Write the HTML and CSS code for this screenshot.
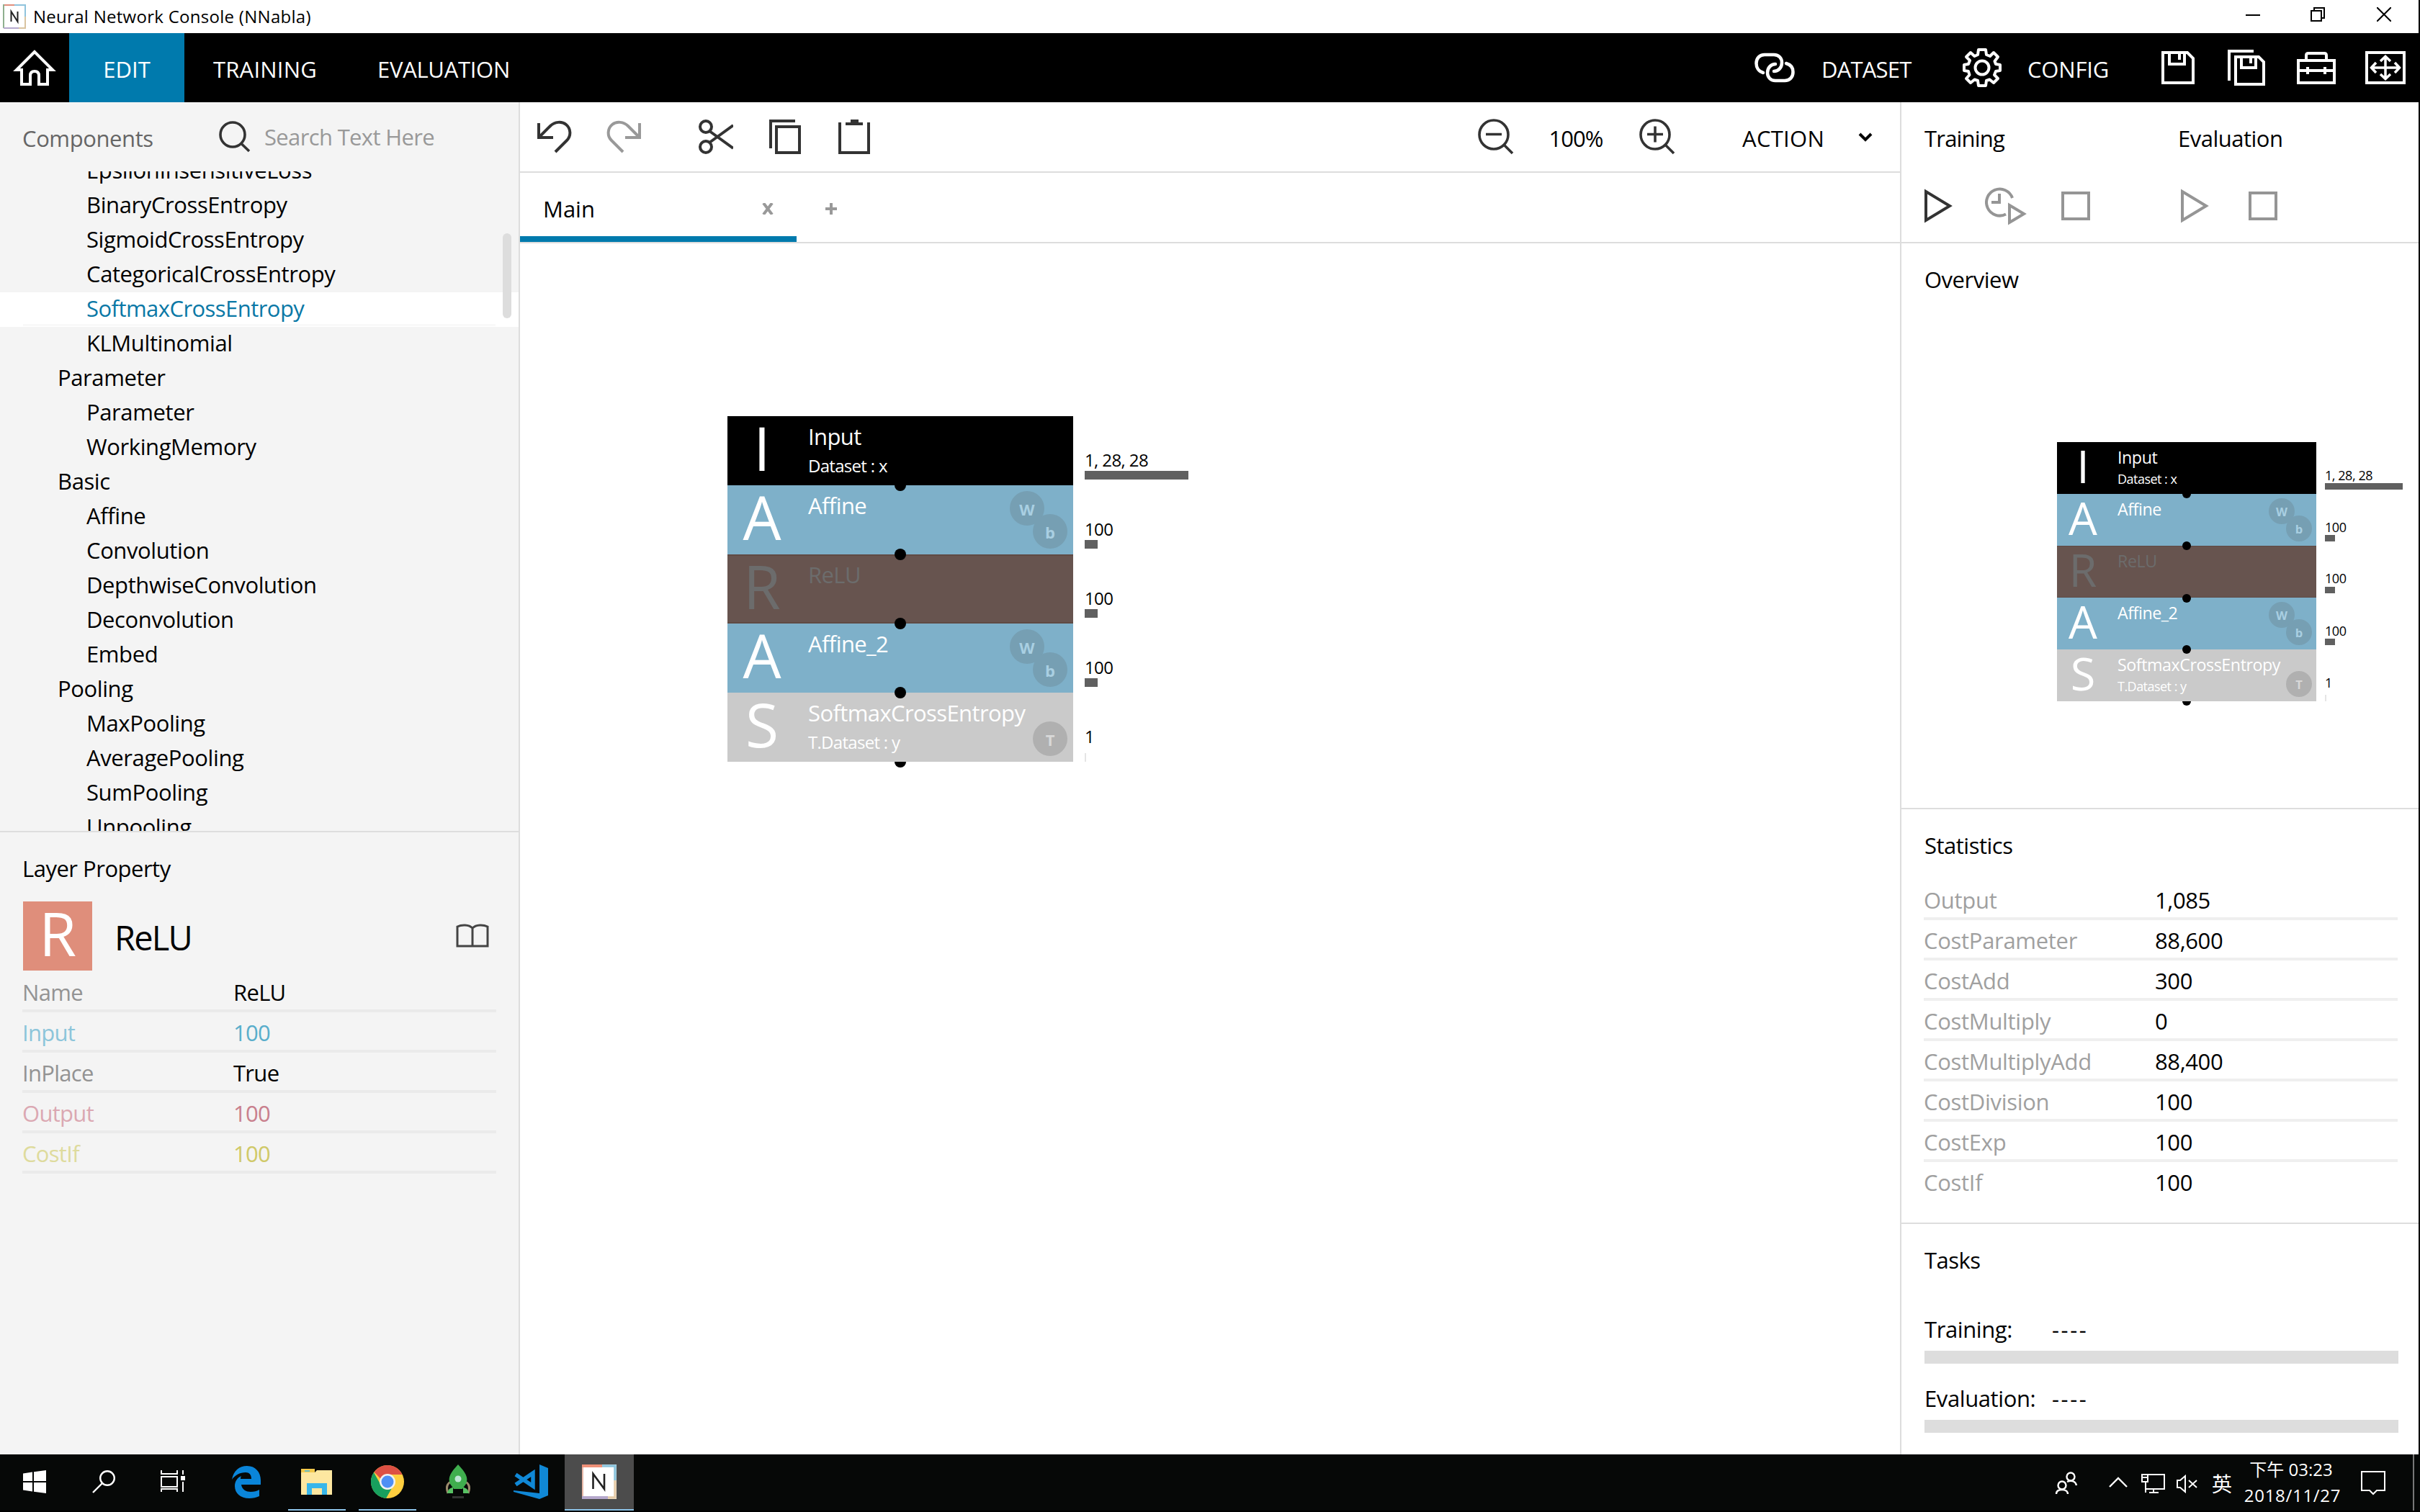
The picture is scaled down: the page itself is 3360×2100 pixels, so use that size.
FILE: index.html
```html
<!DOCTYPE html>
<html lang="en">
<head>
<meta charset="utf-8">
<title>Neural Network Console (NNabla)</title>
<link rel="stylesheet" href="styles.css">
</head>
<body>
<div class="desktop">
  <div class="window">
    <header class="titlebar">
      <svg class="app-icon" width="32" height="34" viewBox="0 0 32 34"><rect width="32" height="34" fill="#fff"/><path d="M0 1H16" stroke="#e08f7d" stroke-width="2"/><path d="M16 1H32M31 0V17" stroke="#8fc3dc" stroke-width="2"/><path d="M1 0V33" stroke="#8fb08f" stroke-width="2"/><path d="M1 33H22" stroke="#b5a8cc" stroke-width="2"/><path d="M22 33H31V17" stroke="#d9c3a0" stroke-width="2" fill="none"/><path d="M11.500 24V10L20.500 24V10" fill="none" stroke="#222" stroke-width="2"/></svg>
      <span class="titlebar-text">Neural Network Console (NNabla)</span>
      <div class="window-buttons">
        <svg width="20" height="20" viewBox="0 0 20 20"><path d="M0 11H20" stroke="#000" stroke-width="2"/></svg>
        <svg width="20" height="20" viewBox="0 0 20 20" fill="none" stroke="#000" stroke-width="2"><path d="M1 5H15V19H1ZM5 5V1H19V15H15"/></svg>
        <svg width="20" height="20" viewBox="0 0 20 20" fill="none" stroke="#000" stroke-width="2"><path d="M0 0L20 20M20 0L0 20"/></svg>
      </div>
    </header>

    <nav class="navbar">
      <div class="nav-home"><svg width="60" height="50" viewBox="0 0 60 50" fill="none" stroke="#fff" stroke-width="4"><path d="M30 3L5 28H12V48H24V36Q24 30 30 30Q36 30 36 36V48H48V28H55Z"/></svg></div>
      <div class="nav-tab nav-tab-edit">EDIT</div>
      <div class="nav-tab nav-tab-training">TRAINING</div>
      <div class="nav-tab nav-tab-evaluation">EVALUATION</div>
      <div class="nav-tools">
        <div class="nav-icon"><svg width="56" height="42" viewBox="0 0 56 42" fill="none" stroke="#fff" stroke-width="4.500" stroke-linecap="round"><path d="M12 28C5 26 2.500 20 2.500 15C2.500 8 7 3 14 3H27C34 3 38 8 38 14C38 21 33 26 27 26"/><path d="M44 15C51 17 53.500 22 53.500 27C53.500 34 49 39 42 39H29C22 39 18 34 18 28C18 21 23 16 29 16"/></svg></div>
        <div class="nav-label nav-label-dataset">DATASET</div>
        <div class="nav-icon"><svg width="54" height="56" viewBox="0 0 54 56" fill="none" stroke="#fff" stroke-width="4" stroke-linejoin="round"><circle cx="27" cy="28" r="9.500"/><path d="M22 3H32L33 10L38 12L43 7L49 13L44.500 19L46 23L52 24V32L46 33L44 38L49 43L43 49L37.500 44.500L33 46L32 53H22L21 46L16.500 44.500L11 49L5 43L9.500 38L8 33L2 32V24L8 23L10 18L5 13L11 7L16.500 12L21 10Z"/></svg></div>
        <div class="nav-label nav-label-config">CONFIG</div>
        <div class="nav-icon"><svg width="48" height="48" viewBox="0 0 48 48" fill="none" stroke="#fff" stroke-width="4"><path d="M3 3H37L45 11V45H3ZM12 3V19H33V3M26 5V13"/></svg></div>
        <div class="nav-icon"><svg class="save-all" width="54" height="52" viewBox="0 0 54 52" fill="none" stroke="#fff" stroke-width="4"><path d="M12 11H44L51 18V49H12ZM20 11V26H40V11M33 13V20M3 44V3H37"/></svg></div>
        <div class="nav-icon"><svg width="56" height="46" viewBox="0 0 56 46" fill="none" stroke="#fff" stroke-width="4"><path d="M3 13H53V44H3ZM14 13V6Q14 3 17 3H39Q42 3 42 6V13M3 27H53M16 22V32M40 22V32"/></svg></div>
        <div class="nav-icon"><svg width="56" height="46" viewBox="0 0 56 46" fill="none" stroke="#fff" stroke-width="4"><path d="M2 2H54V44H2Z"/><path stroke-width="3.500" d="M28 8V38M9 23H47M21 14L28 7.500L35 14M21 32L28 38.500L35 32M15 16L8.500 23L15 30M41 16L47.500 23L41 30"/></svg></div>
      </div>
    </nav>

    <div class="workspace">
      <aside class="left-panel">
        <div class="search-row">
          <span class="search-title">Components</span>
          <svg class="search-icon" width="44" height="44" viewBox="0 0 44 44" fill="none" stroke="#333" stroke-width="3.600"><circle cx="19" cy="19" r="17"/><path d="M30.500 31L42 42"/></svg>
          <span class="search-placeholder">Search Text Here</span>
        </div>
        <div class="component-list">
          <div class="component-scroll">
            <div class="item">EpsilonInsensitiveLoss</div>
            <div class="item">BinaryCrossEntropy</div>
            <div class="item">SigmoidCrossEntropy</div>
            <div class="item">CategoricalCrossEntropy</div>
            <div class="item item-selected">SoftmaxCrossEntropy</div>
            <div class="item">KLMultinomial</div>
            <div class="item item-group">Parameter</div>
            <div class="item">Parameter</div>
            <div class="item">WorkingMemory</div>
            <div class="item item-group">Basic</div>
            <div class="item">Affine</div>
            <div class="item">Convolution</div>
            <div class="item">DepthwiseConvolution</div>
            <div class="item">Deconvolution</div>
            <div class="item">Embed</div>
            <div class="item item-group">Pooling</div>
            <div class="item">MaxPooling</div>
            <div class="item">AveragePooling</div>
            <div class="item">SumPooling</div>
            <div class="item">Unpooling</div>
          </div>
          <div class="scroll-thumb"></div>
        </div>
        <section class="layer-property">
          <h2 class="heading">Layer Property</h2>
          <div class="layer-head">
            <div class="layer-tile">R</div>
            <div class="layer-name">ReLU</div>
            <svg class="book-icon" width="46" height="34" viewBox="0 0 46 34" fill="none" stroke="#444" stroke-width="3"><path d="M23 6C18 1 8 1 2 4V31H44V4C38 1 28 1 23 6V31"/></svg>
          </div>
          <div class="props">
            <div class="prop"><span class="prop-key">Name</span><span>ReLU</span></div>
            <div class="prop prop-input"><span class="prop-key">Input</span><span>100</span></div>
            <div class="prop"><span class="prop-key">InPlace</span><span>True</span></div>
            <div class="prop prop-output"><span class="prop-key">Output</span><span>100</span></div>
            <div class="prop prop-cost"><span class="prop-key">CostIf</span><span>100</span></div>
          </div>
        </section>
      </aside>

      <main class="editor">
        <div class="toolbar">
          <div class="tool"><svg width="48" height="46" viewBox="0 0 48 46" fill="none" stroke="#333" stroke-width="4"><path d="M2 4V24H22M3 23L18 8C24 2 34 1 40 6C47 12 47 22 41 28L25 44"/></svg></div>
          <div class="tool tool-disabled"><svg width="48" height="46" viewBox="0 0 48 46" fill="none" stroke="#999" stroke-width="4"><path d="M46 4V24H26M45 23L30 8C24 2 14 1 8 6C1 12 1 22 7 28L23 44"/></svg></div>
          <div class="tool tool-cut"><svg width="48" height="48" viewBox="0 0 48 48" fill="none" stroke="#333" stroke-width="4"><circle cx="10" cy="10" r="8"/><circle cx="10" cy="38" r="8"/><path d="M15 16L48 40M15 32L48 8"/></svg></div>
          <div class="tool"><svg width="44" height="48" viewBox="0 0 44 48" fill="none" stroke="#333" stroke-width="4"><path d="M2 40V2H36M10 10H42V46H10Z"/></svg></div>
          <div class="tool"><svg width="44" height="48" viewBox="0 0 44 48" fill="none" stroke="#333" stroke-width="4"><path d="M2 4V46H42V4"/><path d="M10 6H34M17 2H28"/></svg></div>
          <div class="zoom-group">
            <div class="tool tool-zoom"><svg width="50" height="50" viewBox="0 0 50 50" fill="none" stroke="#333" stroke-width="3.600"><circle cx="22" cy="22" r="20"/><path d="M36 36L48 48M11 21.500H33"/></svg></div>
            <span class="zoom-value">100%</span>
            <div class="tool tool-zoom"><svg width="50" height="50" viewBox="0 0 50 50" fill="none" stroke="#333" stroke-width="3.600"><circle cx="22" cy="22" r="20"/><path d="M36 36L48 48M11 21.500H33M22 10.500V32.500"/></svg></div>
            <div class="action"><span>ACTION</span><svg width="20" height="14" viewBox="0 0 20 14" fill="none" stroke="#000" stroke-width="4"><path d="M2 2L10 10L18 2"/></svg></div>
          </div>
        </div>
        <div class="tabs">
          <div class="tab"><span>Main</span><svg width="16" height="16" viewBox="0 0 16 16" fill="none" stroke="#999" stroke-width="4"><path d="M2 0L14 16M14 0L2 16"/></svg></div>
          <div class="tab-add"><svg width="16" height="16" viewBox="0 0 16 16" stroke="#999" stroke-width="4"><path d="M0 8H16M8 0V16"/></svg></div>
        </div>
        <div class="canvas">
          <div class="graph graph-main">
            <div class="node node-input"><b class="glyph">I</b><span class="node-name">Input</span><span class="node-sub">Dataset : x</span><i class="port"></i><div class="out"><span>1, 28, 28</span><i class="bar" style="width:144px"></i></div></div>
            <div class="node node-affine"><b class="glyph">A</b><span class="node-name">Affine</span><i class="badge badge-w">W</i><i class="badge badge-b">b</i><i class="port"></i><div class="out"><span>100</span><i class="bar" style="width:18px"></i></div></div>
            <div class="node node-relu"><b class="glyph">R</b><span class="node-name">ReLU</span><i class="port"></i><div class="out"><span>100</span><i class="bar" style="width:18px"></i></div></div>
            <div class="node node-affine"><b class="glyph">A</b><span class="node-name">Affine_2</span><i class="badge badge-w">W</i><i class="badge badge-b">b</i><i class="port"></i><div class="out"><span>100</span><i class="bar" style="width:18px"></i></div></div>
            <div class="node node-softmax"><b class="glyph">S</b><span class="node-name">SoftmaxCrossEntropy</span><span class="node-sub">T.Dataset : y</span><i class="badge badge-t">T</i><i class="port port-last"></i><div class="out"><span>1</span><i class="bar bar-tiny" style="width:2px"></i></div></div>
          </div>
        </div>
      </main>

      <aside class="right-panel">
        <section class="run">
          <div class="run-group run-training">
            <h2 class="run-title">Training</h2>
            <div class="run-buttons">
              <svg width="40" height="48" viewBox="0 0 40 48" fill="none" stroke="#333" stroke-width="4"><path d="M2 4V44L35 24Z"/></svg>
              <svg width="58" height="54" viewBox="0 0 58 54" fill="none" stroke="#959595" stroke-width="4"><path d="M29 38.500A18.500 18.500 0 1 1 38 16M20 10V22H9"/><path d="M34 26V50L54 38Z"/></svg>
              <svg width="40" height="40" viewBox="0 0 40 40" fill="none" stroke="#959595" stroke-width="4"><path d="M2 2H38V38H2Z"/></svg>
            </div>
          </div>
          <div class="run-group run-evaluation">
            <h2 class="run-title">Evaluation</h2>
            <div class="run-buttons">
              <svg width="40" height="48" viewBox="0 0 40 48" fill="none" stroke="#959595" stroke-width="4"><path d="M2 4V44L35 24Z"/></svg>
              <svg width="40" height="40" viewBox="0 0 40 40" fill="none" stroke="#959595" stroke-width="4"><path d="M2 2H38V38H2Z"/></svg>
            </div>
          </div>
        </section>
        <section class="overview">
          <h2 class="heading">Overview</h2>
          <div class="overview-stage">
            <div class="graph graph-overview">
              <div class="node node-input"><b class="glyph">I</b><span class="node-name">Input</span><span class="node-sub">Dataset : x</span><i class="port"></i><div class="out"><span>1, 28, 28</span><i class="bar" style="width:144px"></i></div></div>
              <div class="node node-affine"><b class="glyph">A</b><span class="node-name">Affine</span><i class="badge badge-w">W</i><i class="badge badge-b">b</i><i class="port"></i><div class="out"><span>100</span><i class="bar" style="width:18px"></i></div></div>
              <div class="node node-relu"><b class="glyph">R</b><span class="node-name">ReLU</span><i class="port"></i><div class="out"><span>100</span><i class="bar" style="width:18px"></i></div></div>
              <div class="node node-affine"><b class="glyph">A</b><span class="node-name">Affine_2</span><i class="badge badge-w">W</i><i class="badge badge-b">b</i><i class="port"></i><div class="out"><span>100</span><i class="bar" style="width:18px"></i></div></div>
              <div class="node node-softmax"><b class="glyph">S</b><span class="node-name">SoftmaxCrossEntropy</span><span class="node-sub">T.Dataset : y</span><i class="badge badge-t">T</i><i class="port port-last"></i><div class="out"><span>1</span><i class="bar bar-tiny" style="width:2px"></i></div></div>
            </div>
          </div>
        </section>
        <section class="statistics">
          <h2 class="heading">Statistics</h2>
          <div class="props">
            <div class="prop"><span class="prop-key">Output</span><span>1,085</span></div>
            <div class="prop"><span class="prop-key">CostParameter</span><span>88,600</span></div>
            <div class="prop"><span class="prop-key">CostAdd</span><span>300</span></div>
            <div class="prop"><span class="prop-key">CostMultiply</span><span>0</span></div>
            <div class="prop"><span class="prop-key">CostMultiplyAdd</span><span>88,400</span></div>
            <div class="prop"><span class="prop-key">CostDivision</span><span>100</span></div>
            <div class="prop"><span class="prop-key">CostExp</span><span>100</span></div>
            <div class="prop"><span class="prop-key">CostIf</span><span>100</span></div>
          </div>
        </section>
        <section class="tasks">
          <h2 class="heading">Tasks</h2>
          <div class="task"><span class="task-key">Training:</span><span class="task-value">----</span></div>
          <div class="task-bar"></div>
          <div class="task"><span class="task-key">Evaluation:</span><span class="task-value">----</span></div>
          <div class="task-bar"></div>
        </section>
      </aside>
    </div>
  </div>

  <footer class="taskbar">
    <div class="task-icon"><svg width="32" height="32" viewBox="0 0 32 32" fill="#fff"><path d="M0 4.500L13 2.500V15H0ZM15 2.200L32 0V15H15ZM0 17H13V29.500L0 27.500ZM15 17H32V32L15 29.800Z"/></svg></div>
    <div class="task-icon"><svg width="32" height="32" viewBox="0 0 32 32" fill="none" stroke="#fff" stroke-width="2.400"><circle cx="21" cy="11" r="9.800"/><path d="M14 18L1 31"/></svg></div>
    <div class="task-icon"><svg width="34" height="32" viewBox="0 0 34 32" fill="none" stroke="#fff" stroke-width="2"><path d="M1 0V5H23V0M1 9H23V23H1ZM1 30V26H23V30M31 0V6M31 16V30"/><path d="M28 11H34" stroke-width="6"/></svg></div>
    <div class="task-icon task-edge"><svg width="42" height="46" viewBox="0 0 42 46"><path fill="#0a85d9" d="M1 20C3 8 11 1 22 1C34 1 41 10 41 21V27H14C15 34 21 37 27 37C32 37 36 36 39 34V43C35 45 30 46 25 46C13 46 5 39 5 29C5 22 9 17 14 15C13 17 13 18 13 19H28C28 13 25 10 20 10C12 10 5 14 1 20Z"/></svg></div>
    <div class="task-icon task-folder open"><svg width="44" height="36" viewBox="0 0 44 36"><path fill="#f2c94c" d="M0 0H19V5H0Z"/><path fill="#6cc0c8" d="M5 2H12V4H5Z"/><path fill="#fde7a0" d="M0 5H19L22 2H43V36H0Z"/><path fill="#38b6ea" d="M8 20H36V36H29V27H15V36H8Z"/></svg></div>
    <div class="task-icon task-chrome open"><svg width="46" height="46" viewBox="0 0 46 46"><circle cx="23" cy="23" r="23" fill="#ffcf3f"/><path fill="#dd5044" d="M23 0A23 23 0 0 1 43.500 13H23A10.500 10.500 0 0 0 13.500 19L4.500 9.500A23 23 0 0 1 23 0Z"/><path fill="#18a05e" d="M4 10A23 23 0 0 0 21 46L29 32A10.500 10.500 0 0 1 13.500 27Z"/><circle cx="23" cy="23" r="11" fill="#f1f1f1"/><circle cx="23" cy="23" r="8.500" fill="#4f8ff5"/></svg></div>
    <div class="task-icon task-rocket"><svg width="36" height="48" viewBox="0 0 36 48"><path d="M8 24C2 27 1 32 4 40M28 24C34 27 35 32 32 40" fill="none" stroke="#9c8b6c" stroke-width="3"/><path fill="#3fae4e" d="M18 0C28 11 33 18 29 27L24 34H12L7 27C3 18 8 11 18 0Z"/><path fill="#57c163" d="M3 40C4 34 8 32 11 32V40ZM33 40C32 34 28 32 25 32V40Z"/><circle cx="18" cy="20" r="4.500" fill="#bfe6d6"/><path fill="#333" d="M10 44H26V47H10Z"/></svg></div>
    <div class="task-icon task-code"><svg width="48" height="48" viewBox="0 0 48 48" fill="#1088d6"><path d="M36 0L48 5V43L36 48L0 38V36L36 40Z"/><path fill="none" stroke="#1088d6" stroke-width="5.500" d="M3 14L27 30V12L3 28"/></svg></div>
    <div class="task-icon task-nnc open"><svg width="48" height="48" viewBox="0 0 48 48"><rect width="48" height="48" fill="#fff"/><path d="M0 2H28" stroke="#ee9078" stroke-width="4"/><path d="M28 2H46V22" stroke="#8cc4dc" stroke-width="3.500" fill="none"/><path d="M1 4V44" stroke="#e8b8a8" stroke-width="2"/><path d="M0 46H36" stroke="#b5a8cc" stroke-width="4"/><path d="M36 46H46V22" stroke="#e5cba8" stroke-width="3.500" fill="none"/><path d="M15.500 34V13L31 34V13" fill="none" stroke="#222" stroke-width="2.600"/></svg></div>
    <div class="tray">
      <svg class="tray-people" width="32" height="32" viewBox="0 0 32 32" fill="none" stroke="#fff" stroke-width="2.400"><circle cx="22" cy="7" r="5.500"/><circle cx="10" cy="19" r="5.500"/><path d="M2 31C2 27 5 25 10 25C14 25 18 27 18 31M17 14C24 11 29 14 30 19"/></svg>
      <svg class="tray-up" width="26" height="16" viewBox="0 0 26 16" fill="none" stroke="#fff" stroke-width="2.400"><path d="M1 14L13 2L25 14"/></svg>
      <svg class="tray-net" width="34" height="28" viewBox="0 0 34 28" fill="none" stroke="#fff" stroke-width="2"><path d="M9 1H32V21H7M1 1H9V11H1ZM1 5H9M6 11V26M17 21V26M11 26H24"/></svg>
      <svg class="tray-sound" width="30" height="26" viewBox="0 0 30 26" fill="none" stroke="#fff" stroke-width="2"><path d="M1 8H5L12 2V24L5 18H1ZM17 8L28 18M28 8L17 18"/></svg>
      <span class="tray-ime">英</span>
      <div class="clock"><span class="time">下午 03:23</span><span class="date">2018/11/27</span></div>
      <svg class="tray-note" width="34" height="34" viewBox="0 0 34 34" fill="none" stroke="#fff" stroke-width="2"><path d="M1 1H33V27H22L17 32L12 27H1Z"/></svg>
      <div class="show-desktop"></div>
    </div>
  </footer>
</div>
</body>
</html>
```
FILE: styles.css
```css
* { box-sizing: border-box; }

body {
  margin: 0;
  background: #000;
  color: #000;
  font-family: "Open Sans", "Noto Sans CJK TC", sans-serif;
  font-size: 31px;
  letter-spacing: -0.4px;
}

svg { display: block; flex: none; }
h2 { margin: 0; font-size: inherit; font-weight: 400; }
i, b { font-style: normal; font-weight: 400; }

.desktop { width: 3360px; height: 2100px; overflow: hidden; display: flex; flex-direction: column; }
.window { height: 2020px; border-right: 2px solid #000; background: #fff; display: flex; flex-direction: column; }

/* title bar */
.titlebar { height: 46px; display: flex; align-items: center; padding-left: 4px; flex: none; }
.titlebar-text { margin-left: 10px; font-size: 24px; letter-spacing: 0.28px; line-height: 46px; padding-bottom: 1px; }
.window-buttons { margin: -6px 38px 0 auto; display: flex; gap: 72px; }
.window-buttons svg:first-child { margin-right: -2px; }

/* navigation */
.navbar { height: 96px; background: #000; color: #fff; display: flex; flex: none; width: 3360px; letter-spacing: 0; }
.nav-home { width: 96px; display: flex; align-items: center; justify-content: center; }
.nav-tab { padding-top: 4px; line-height: 92px; text-align: center; }
.nav-tab-edit { width: 160px; background: #007aad; }
.nav-tab-training { width: 224px; letter-spacing: 0.2px; }
.nav-tab-evaluation { width: 272px; letter-spacing: -0.3px; }
.nav-tools { margin-left: auto; display: flex; }
.nav-icon { width: 96px; display: flex; align-items: center; justify-content: center; }
.save-all { margin-left: -3px; }
.nav-label { padding: 4px 0 0 16px; line-height: 92px; }
.nav-label-dataset { width: 192px; padding-left: 17px; letter-spacing: -0.8px; }
.nav-label-config { width: 176px; padding-left: 15px; letter-spacing: -0.2px; }

/* layout */
.workspace { flex: 1; display: flex; min-height: 0; }
.left-panel { width: 722px; border-right: 2px solid #ddd; background: #f4f4f4; display: flex; flex-direction: column; }
.editor { width: 1916px; display: flex; flex-direction: column; }
.right-panel { width: 720px; border-left: 2px solid #ddd; display: flex; flex-direction: column; }
.heading { padding: 4px 0 0 32px; height: 96px; line-height: 92px; letter-spacing: -0.5px; }
.layer-property .heading { padding-left: 31px; }

/* component list */
.search-row { height: 96px; display: flex; flex: none; line-height: 96px; padding-left: 31px; }
.search-title { width: 273px; padding-top: 2px; color: #666; letter-spacing: -0.4px; }
.search-icon { margin-top: 26px; }
.search-placeholder { margin-left: 19px; color: #999; letter-spacing: -0.65px; }
.component-list { height: 918px; border-bottom: 2px solid #ddd; overflow: hidden; position: relative; flex: none; }
.component-scroll { margin-top: -24px; }
.item { height: 48px; line-height: 44px; padding-left: 120px; }
.item-group { padding-left: 80px; }
.item-selected { background: linear-gradient(#f9f9f9, #f9f9f9) 32px 44px / 656px 3px no-repeat #fff; color: #0a78a6; letter-spacing: -0.55px; }
.scroll-thumb { position: absolute; top: 86px; right: 10px; width: 12px; height: 118px; border-radius: 6px; background: #ddd; }

/* layer properties */
.layer-head { height: 96px; display: flex; padding: 0 41px 0 32px; }
.layer-tile { width: 96px; background: #df8e7b; color: #fff; font-size: 84px; line-height: 87px; text-align: center; }
.layer-name { margin-left: 31px; font-size: 47px; line-height: 100px; letter-spacing: -1.8px; }
.book-icon { margin: 31px 0 0 auto; }
.props { padding: 2px 29px 0 31px; }
.prop { height: 56px; line-height: 56px; border-bottom: 4px solid #eaeaea; display: flex; }
.prop-key { width: 293px; color: #939393; }
.prop-input { color: #5aaecb; }
.prop-input .prop-key { color: #8cc5da; }
.prop-output { color: #c9808d; }
.prop-output .prop-key { color: #dba8b2; }
.prop-cost { color: #d0c968; }
.prop-cost .prop-key { color: #dedb9d; }
.layer-property .props { padding-right: 31px; }
.layer-property .prop { letter-spacing: -0.7px; }

/* editor toolbar */
.toolbar { height: 98px; border-bottom: 2px solid #ddd; display: flex; flex: none; }
.tool { width: 96px; display: flex; align-items: center; justify-content: center; }
.tool-cut { margin-left: 32px; }
.tool-zoom { padding-left: 2px; }
.zoom-group { margin-left: auto; display: flex; }
.zoom-value { width: 128px; padding-top: 4px; line-height: 92px; text-align: center; letter-spacing: -1px; }
.action { width: 290px; padding: 4px 38px 0 71px; line-height: 92px; display: flex; justify-content: space-between; letter-spacing: 0.3px; }
.action svg { margin-top: 38px; }

/* document tabs */
.tabs { height: 98px; border-bottom: 2px solid #ddd; display: flex; flex: none; }
.tab { width: 384px; height: 96px; border-bottom: 8px solid #007aad; padding: 4px 32px 0 32px; line-height: 92px; display: flex; justify-content: space-between; letter-spacing: 0; }
.tab svg { margin-top: 38px; }
.tab-add { padding: 42px 0 0 40px; }

/* network graph */
.canvas { flex: 1; position: relative; }
.graph { width: 480px; display: flex; flex-direction: column; }
.graph-main { position: absolute; left: 288px; top: 240px; }
.overview-stage { padding: 180px 0 0 216px; }
.graph-overview { zoom: 0.75; }
.node { position: relative; height: 96px; padding-left: 112px; color: #fff; display: flex; flex-direction: column; }
.node-input { background: #000; }
.node-affine { background: #7eb0c9; }
.node-relu { background: #67544f; color: #6c6c6c; border: solid #5f4a44; border-width: 2px 0; }
.node-softmax { background: #cacaca; }
.glyph { position: absolute; left: 0; top: 0; width: 96px; font-size: 84px; line-height: 87px; text-align: center; letter-spacing: 0; }
.node-relu .glyph, .node-relu .node-name { margin-top: -2px; }
.node-name { line-height: 56px; letter-spacing: -0.6px; }
.node-sub { font-size: 24px; line-height: 36px; margin-top: -5px; letter-spacing: -0.7px; }
.port { position: absolute; left: 232px; bottom: -8px; width: 16px; height: 16px; border-radius: 8px; background: #000; z-index: 1; }
.node-relu .port { bottom: -10px; }
.port-last { height: 8px; border-radius: 0 0 8px 8px; }
.badge { position: absolute; width: 48px; height: 48px; border-radius: 24px; background: #769fb3; color: #a9cfe2; font-size: 22px; font-weight: 700; line-height: 50px; text-align: center; letter-spacing: 0; }
.badge-w { left: 392px; top: 8px; }
.badge-b { left: 424px; top: 40px; }
.badge-t { left: 424px; top: 40px; background: #b0b0b0; color: #d8d8d8; }
.out { position: absolute; left: 496px; top: 0; color: #000; font-size: 24px; line-height: 40px; letter-spacing: -0.6px; white-space: nowrap; padding-top: 41px; }
.node-relu .out { top: -2px; }
.out span { display: block; height: 35px; }
.bar { display: block; height: 12px; background: #606060; }
.bar-tiny { background: #e5e5e5; margin-top: 8px; }

/* run controls */
.run { height: 196px; border-bottom: 2px solid #ddd; display: flex; flex: none; }
.run-training { width: 384px; padding-left: 32px; }
.run-title { padding-top: 4px; line-height: 92px; letter-spacing: -0.8px; }
.run-evaluation .run-title { letter-spacing: -0.5px; }
.run-buttons { height: 96px; display: flex; align-items: center; }
.run-training .run-buttons { gap: 44px; }
.run-training .run-buttons svg:last-child { margin-left: 4px; }
.run-evaluation .run-buttons { gap: 54px; padding-left: 4px; }

/* right sections */
.overview { height: 786px; border-bottom: 2px solid #ddd; flex: none; }
.statistics { height: 576px; border-bottom: 2px solid #ddd; flex: none; }
.statistics .prop { border-color: #efefef; }
.statistics .prop:last-child { border-color: transparent; }
.statistics .prop-key { width: 321px; color: #a0a0a0; letter-spacing: -0.3px; }
.tasks { flex: 1; }
.tasks .heading { margin-bottom: 2px; }
.task { height: 78px; padding: 18px 0 0 32px; line-height: 60px; display: flex; }
.task-key { width: 177px; }
.task-value { letter-spacing: 2.6px; }
.task-bar { height: 18px; margin: 0 28px 0 32px; background: #ddd; }

/* taskbar */
.taskbar { height: 80px; background: #060807; border-bottom: 2px solid #000; color: #fff; display: flex; }
.task-icon { width: 96px; height: 78px; display: flex; align-items: center; justify-content: center; border-bottom: 2px solid transparent; }
.task-edge { width: 108px; }
.task-folder { width: 80px; margin-left: 4px; }
.task-chrome { width: 80px; margin-left: 18px; }
.task-rocket { width: 116px; }
.task-code { width: 90px; padding-right: 4px; }
.task-nnc { background: #4c4c4c; }
.open { border-bottom-color: #8cc4ea; }
.tray { margin-left: auto; display: flex; }
.tray-people { margin-top: 24px; }
.tray-up { margin: 31px 0 0 43px; }
.tray-net { margin: 27px 0 0 19px; }
.tray-sound { margin: 28px 0 0 15px; }
.tray-ime { margin-left: 19px; font-family: "Noto Sans CJK TC", sans-serif; font-size: 28px; line-height: 80px; letter-spacing: 0; }
.clock { width: 152px; margin-left: 8px; padding-top: 3px; font-size: 24px; line-height: 36px; text-align: center; display: flex; flex-direction: column; }
.time { letter-spacing: 0; margin-right: 4px; }
.date { letter-spacing: 0.7px; }
.tray-note { margin: 23px 0 0 19px; }
.show-desktop { width: 10px; margin-left: 38px; border-left: 2px solid #777; }
```
